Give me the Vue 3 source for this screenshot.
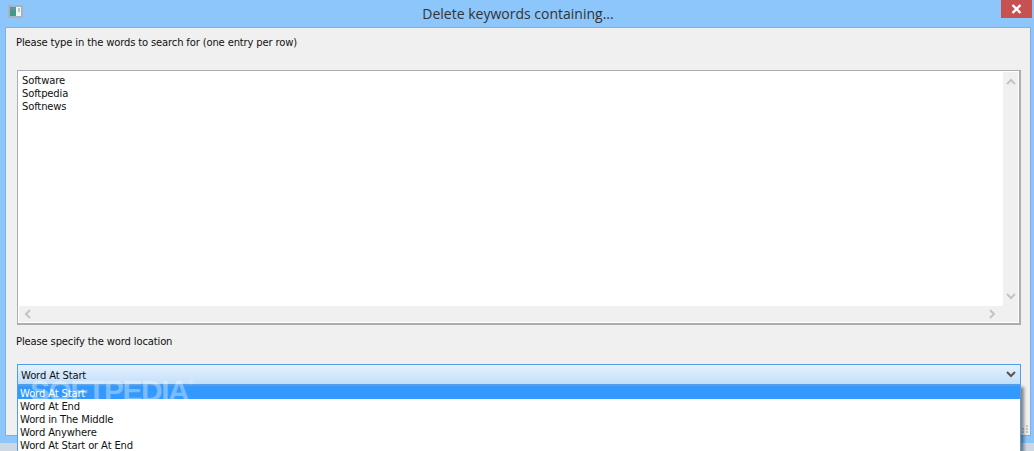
<script setup>
const words = ['Software', 'Softpedia', 'Softnews']
const options = ['Word At Start', 'Word At End', 'Word in The Middle', 'Word Anywhere', 'Word At Start or At End']
</script>

<template>
  <div class="screen">
    <div class="window">
      <header class="titlebar">
        <svg class="app-icon" width="15" height="13" viewBox="0 0 15 13">
          <rect x="0" y="0" width="15" height="13" fill="#aab3bb" />
          <rect x="2" y="2" width="11" height="9" fill="#f2f6f5" />
          <rect x="2" y="2" width="6" height="9" fill="#3f9a86" />
          <rect x="2" y="2" width="6" height="3" fill="#5f8fb5" />
          <rect x="10" y="3" width="2" height="4" fill="#a5d0c0" />
        </svg>
        <div class="title">Delete keywords containing...</div>
        <div class="close">
          <svg width="11" height="10" viewBox="0 0 11 10">
            <path d="M1.5 1 L9.5 9 M9.5 1 L1.5 9" stroke="#fff" stroke-width="2.4" fill="none" />
          </svg>
        </div>
      </header>
      <main class="client">
        <p class="label first">Please type in the words to search for (one entry per row)</p>
        <div class="memo">
          <div class="memo-body">
            <div class="memo-text">
              <div v-for="w in words" :key="w" class="line">{{ w }}</div>
            </div>
            <div class="vbar">
              <svg width="10" height="7" viewBox="0 0 10 7"><path d="M1 6 L5 2 L9 6" stroke="#c4c4c4" stroke-width="2" fill="none" /></svg>
              <svg width="10" height="7" viewBox="0 0 10 7"><path d="M1 1 L5 5 L9 1" stroke="#c4c4c4" stroke-width="2" fill="none" /></svg>
            </div>
          </div>
          <div class="hbar">
            <svg width="7" height="10" viewBox="0 0 7 10"><path d="M6 1 L2 5 L6 9" stroke="#c4c4c4" stroke-width="2" fill="none" /></svg>
            <svg width="7" height="10" viewBox="0 0 7 10"><path d="M1 1 L5 5 L1 9" stroke="#c4c4c4" stroke-width="2" fill="none" /></svg>
          </div>
        </div>
        <p class="label second">Please specify the word location</p>
        <div class="combo-wrap">
          <div class="combo">
            <span class="combo-text">Word At Start</span>
            <svg width="10" height="7" viewBox="0 0 10 7"><path d="M1 1 L5 5 L9 1" stroke="#555" stroke-width="2" fill="none" /></svg>
          </div>
          <svg class="grip" width="6" height="8" viewBox="0 0 6 8">
            <g fill="#c4c4c4">
              <rect x="4" y="0" width="2" height="2" /><rect x="4" y="3" width="2" height="2" /><rect x="4" y="6" width="2" height="2" />
              <rect x="0" y="3" width="2" height="2" /><rect x="0" y="6" width="2" height="2" />
            </g>
          </svg>
          <ul class="dropdown">
            <li v-for="(o, i) in options" :key="o" :class="{ selected: i === 0 }">{{ o }}</li>
          </ul>
          <div class="watermark">SOFTPEDIA<sup>®</sup></div>
        </div>
      </main>
    </div>
    <div class="below"></div>
  </div>
</template>

<style>
html, body { margin: 0; overflow: hidden; background: #8cc6fb; }
</style>

<style scoped>
.screen {
  width: 1034px;
  height: 451px;
  overflow: hidden;
  display: flex;
  flex-direction: column;
  font-family: "DejaVu Sans", sans-serif;
  font-size: 10px;
  letter-spacing: -0.15px;
  color: #111;
}
.window {
  height: 443px;
  box-sizing: border-box;
  padding: 0 3px 7px 5px;
  background: #8cc6fb;
  display: flex;
  flex-direction: column;
}
.below { flex: 1; background: #cdd8e4; }
.titlebar {
  height: 27px;
  flex: none;
  display: flex;
  align-items: flex-start;
  margin-left: 3px;
}
.app-icon { margin-top: 5px; flex: none; }
.title {
  flex: 1;
  text-align: center;
  font-family: "Open Sans", sans-serif;
  font-size: 14px;
  letter-spacing: 0;
  line-height: 27px;
  color: #333;
  padding-left: 12px;
}
.close {
  width: 31px;
  height: 18px;
  margin-right: -1px;
  flex: none;
  background: #c75050;
  display: flex;
  align-items: center;
  justify-content: center;
}
.client {
  flex: 1;
  box-sizing: border-box;
  background: #f0f0f0;
  border: 1px solid #7fb0de;
  padding: 0 9px 0 11px;
  min-height: 0;
}
.label { margin: 0 0 0 -1px; line-height: 13px; }
.first { padding-top: 8px; height: 34px; }
.second { padding-top: 10px; height: 29px; }
.memo {
  height: 255px;
  box-sizing: border-box;
  border: solid #abadb3;
  border-width: 1px 2px 2px 1px;
  background: #fff;
  padding: 1px 1px 1px 1px;
  display: flex;
  flex-direction: column;
}
.memo-body { flex: 1; display: flex; min-height: 0; }
.memo-text { flex: 1; padding: 2px 3px; }
.line { line-height: 13px; }
.vbar {
  width: 15px;
  background: #f0f0f0;
  display: flex;
  flex-direction: column;
  justify-content: space-between;
  align-items: center;
  padding: 6px 0;
  box-sizing: border-box;
}
.hbar {
  height: 16px;
  flex: none;
  background: #f0f0f0;
  display: flex;
  justify-content: space-between;
  align-items: center;
  padding: 0 22px 0 5px;
}
.combo-wrap { position: relative; }
.combo {
  height: 21px;
  box-sizing: border-box;
  border: 1px solid #569de5;
  background: linear-gradient(#e4f1fd, #c4dffb);
  display: flex;
  align-items: center;
  justify-content: space-between;
  padding: 0 4px 0 3px;
}
.combo-text { padding-top: 1px; }
.dropdown {
  position: absolute;
  left: 0;
  right: 0;
  top: 20px;
  margin: 0;
  padding: 0;
  list-style: none;
  background: #fff;
  border: 1px solid #569de5;
  border-top-width: 2px;
  height: 70px;
  box-shadow: 3px 3px 3px rgba(0, 0, 0, 0.45);
}
.dropdown li { height: 13px; line-height: 15px; padding-left: 2px; }
.dropdown .selected { background: #3399ff; color: #fff; }
.watermark {
  position: absolute;
  left: 13px;
  top: 12px;
  font-family: "Liberation Sans", sans-serif;
  font-weight: 700;
  font-size: 30px;
  line-height: 30px;
  letter-spacing: -1.5px;
  color: rgba(255, 255, 255, 0.35);
  pointer-events: none;
}
.watermark sup { font-size: 8px; vertical-align: 16px; line-height: 0; }
.grip { position: absolute; right: -7px; top: 61px; }
</style>
